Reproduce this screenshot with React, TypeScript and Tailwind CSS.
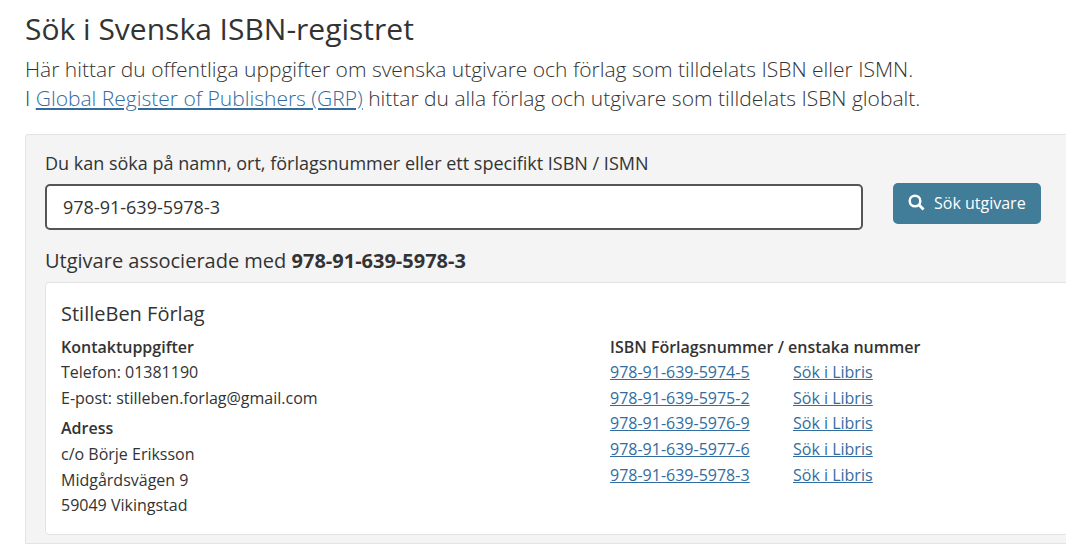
import React from "react";

const numbers = ["978-91-639-5974-5", "978-91-639-5975-2", "978-91-639-5976-9", "978-91-639-5977-6", "978-91-639-5978-3"];

export default function App() {
  return (
    <div className="h-[554px] w-[1066px] overflow-hidden bg-white pl-[25px] pt-[10px] text-[#333] font-['Open_Sans',sans-serif]">
      <h1 className="text-[30px] leading-[38px] font-normal">Sök i Svenska ISBN-registret</h1>
      <p className="mt-[7px] text-[21px] leading-[29px] font-light whitespace-nowrap text-[#333]">
        Här hittar du offentliga uppgifter om svenska utgivare och förlag som tilldelats ISBN eller ISMN.
        <br />
        I <a className="text-[#336c9e] underline">Global Register of Publishers (GRP)</a> hittar du alla förlag och utgivare som tilldelats ISBN globalt.
      </p>
      <section className="mt-[21px] h-[410px] w-[1100px] rounded-t-[3px] border border-[#e3e3e3] bg-[#f4f4f4] pl-[19px] pt-[17px]">
        <label className="block text-[18px] leading-[22px]">Du kan söka på namn, ort, förlagsnummer eller ett specifikt ISBN / ISMN</label>
        <div className="mt-[10px] flex items-start">
          <div className="flex h-[46px] w-[818px] items-center rounded-[5px] border-2 border-[#555] bg-white pl-[16px] text-[18px]">978-91-639-5978-3</div>
          <button className="ml-[30px] -mt-[1px] flex h-[41px] w-[148px] items-center justify-start gap-[9px] rounded-[5px] bg-[#417c98] pb-[2px] pl-[15px] text-[16px] text-white">
            <svg width="17" height="17" viewBox="0 0 17 17" fill="none" stroke="currentColor" aria-hidden="true">
              <circle cx="7" cy="7" r="5.3" strokeWidth="2.5" />
              <path d="M10.8 10.8 15.6 15.6" strokeWidth="2.8" />
            </svg>
            Sök utgivare
          </button>
        </div>
        <p className="mt-[17px] text-[20px] leading-[27px]">Utgivare associerade med <b>978-91-639-5978-3</b></p>
        <div className="mt-[8px] flex h-[253px] w-[1060px] rounded-[4px] border border-[#e3e3e3] bg-white pl-[15px] pt-[17px] text-[16px] leading-[25.7px]">
          <div className="w-[549px]">
            <h2 className="text-[20px] leading-[28px] font-normal">StilleBen Förlag</h2>
            <div className="mt-[6.6px] font-semibold">Kontaktuppgifter</div>
            <div>Telefon: 01381190</div>
            <div>E-post: stilleben.forlag@gmail.com</div>
            <div className="mt-[4.4px] font-semibold">Adress</div>
            <div>c/o Börje Eriksson</div>
            <div>Midgårdsvägen 9</div>
            <div>59049 Vikingstad</div>
          </div>
          <div className="pt-[35px]">
            <div className="font-semibold leading-[25px]">ISBN Förlagsnummer / enstaka nummer</div>
            {numbers.map((n) => (
              <div key={n} className="flex text-[#336c9e] underline">
                <a className="w-[183px]">{n}</a>
                <a>Sök i Libris</a>
              </div>
            ))}
          </div>
        </div>
      </section>
    </div>
  );
}
